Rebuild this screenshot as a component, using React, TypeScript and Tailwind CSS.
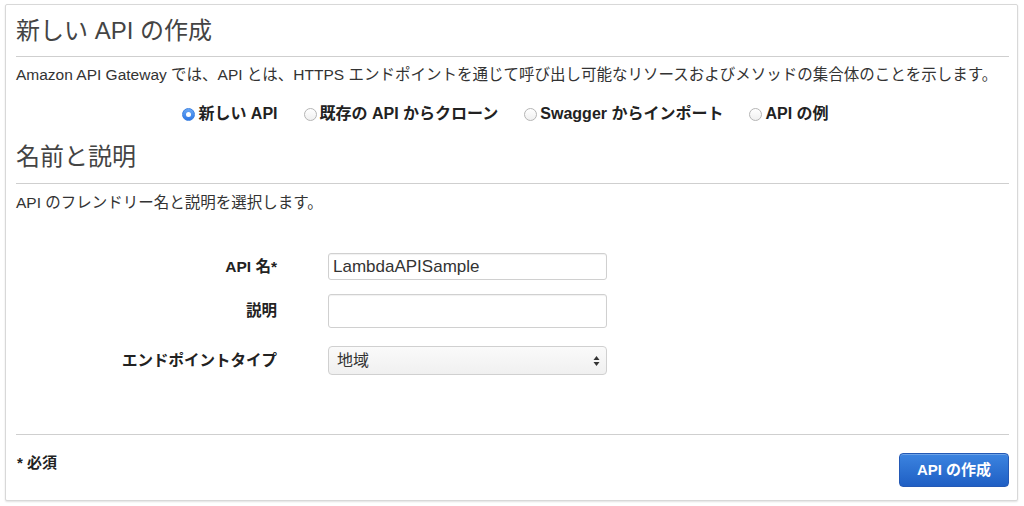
import React from "react";

const font = {
  fontFamily:
    '"Liberation Sans", "Noto Sans CJK JP", Arial, sans-serif',
};

function Radio({ checked, label }: { checked?: boolean; label: string }) {
  return (
    <label className="flex items-center gap-[3px] text-[16px] font-bold text-[#222] leading-[20px]">
      {checked ? (
        <span className="flex h-[13px] w-[13px] items-center justify-center rounded-full border border-[#3b7fe0] bg-gradient-to-b from-[#6aa8f5] to-[#2e78e6]">
          <span className="h-[5px] w-[5px] rounded-full bg-white" />
        </span>
      ) : (
        <span className="h-[13px] w-[13px] rounded-full border border-[#b5b5b5] bg-gradient-to-b from-white to-[#f0f0f0]" />
      )}
      <span>{label}</span>
    </label>
  );
}

export default function App() {
  return (
    <div className="h-[506px] w-[1024px] bg-white pl-[5px] pt-[4px]" style={font}>
      <div className="h-[497px] w-[1013px] rounded-[2px] border border-[#d8d8d8] bg-white pl-[10px] pr-[8px] shadow-[0_1px_2px_rgba(0,0,0,0.12)]">
        {/* page title */}
        <div className="border-b border-[#cfcfcf] pt-[12px] pb-[12px] text-[24px] leading-[27px] text-[#444]">
          新しい API の作成
        </div>
        <p className="mt-[9px] h-[18px] whitespace-nowrap text-[15.5px] leading-[18px] text-[#333]">
          Amazon API Gateway では、API とは、HTTPS エンドポイントを通じて呼び出し可能なリソースおよびメソッドの集合体のことを示します。
        </p>
        <div className="mt-[20px] flex h-[20px] items-center justify-center gap-[26px] pr-[14px]">
          <Radio checked label="新しい API" />
          <Radio label="既存の API からクローン" />
          <Radio label="Swagger からインポート" />
          <Radio label="API の例" />
        </div>

        {/* name and description */}
        <div className="mt-[19px] border-b border-[#cfcfcf] pb-[13px] text-[24px] leading-[27px] text-[#444]">
          名前と説明
        </div>
        <p className="mt-[10px] h-[18px] text-[15.5px] leading-[18px] text-[#333]">
          API のフレンドリー名と説明を選択します。
        </p>

        <div className="mt-[41px] grid grid-cols-[261px_279px] items-center gap-x-[51px]">
          <div className="text-right text-[15.5px] font-bold text-[#222]">API 名*</div>
          <div className="flex h-[27px] items-center rounded-[3px] border border-[#d0d0d0] bg-white px-[4px] text-[17px] text-[#333] shadow-[inset_0_1px_1px_rgba(0,0,0,0.06)]">
            LambdaAPISample
          </div>

          <div className="mt-[14px] text-right text-[15.5px] font-bold text-[#222]">説明</div>
          <div className="mt-[14px] h-[34px] rounded-[3px] border border-[#d0d0d0] bg-white shadow-[inset_0_1px_1px_rgba(0,0,0,0.06)]" />

          <div className="mt-[18px] text-right text-[15.5px] font-bold text-[#222]">エンドポイントタイプ</div>
          <div className="mt-[18px] flex h-[29px] items-center justify-between rounded-[4px] border border-[#d0d0d0] bg-gradient-to-b from-[#fafafa] to-[#f0f0f0] pl-[8px] pr-[6px] text-[16px] text-[#333]">
            <span>地域</span>
            <svg width="7" height="12" viewBox="0 0 7 12">
              <path d="M3.5 1 L6.5 5 L0.5 5 Z" fill="#333" />
              <path d="M3.5 11 L6.5 7 L0.5 7 Z" fill="#333" />
            </svg>
          </div>
        </div>

        {/* footer */}
        <div className="mt-[59px] flex items-start justify-between border-t border-[#cfcfcf]">
          <div className="mt-[19px] pl-[1px] text-[15px] font-bold leading-[18px] text-[#222]">* 必須</div>
          <button className="mt-[18px] h-[34px] w-[110px] rounded-[4px] border border-[#2459b5] bg-gradient-to-b from-[#3c84e0] to-[#1f5fc4] text-[15px] font-bold text-white shadow-[inset_0_1px_0_rgba(255,255,255,0.25)]">
            API の作成
          </button>
        </div>
      </div>
    </div>
  );
}
